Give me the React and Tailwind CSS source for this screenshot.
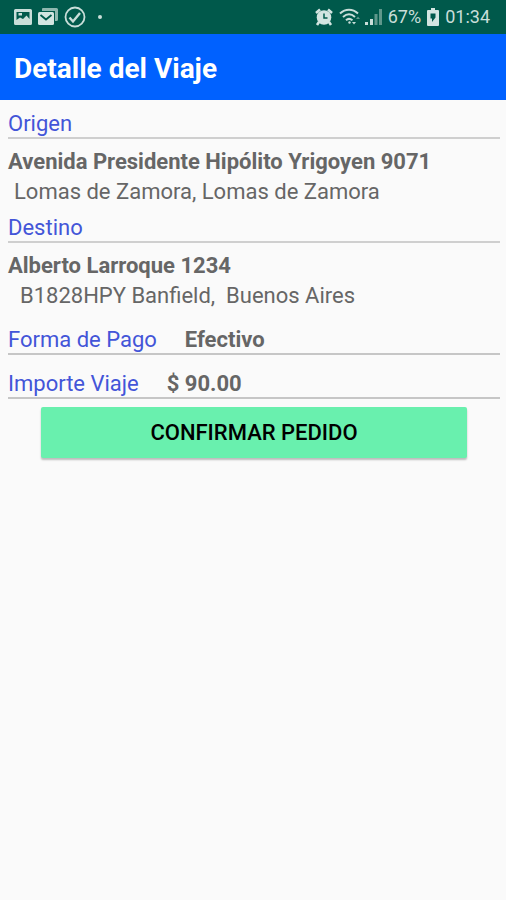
// Encabezado azul de cada sección con su línea inferior
const Seccion = ({ titulo, children }) => (
  <section className="pt-2">
    <h2 className="border-b-2 border-[#cfcfcf] leading-[26px] font-normal text-[#4355d8]">{titulo}</h2>
    <div className="pt-2">{children}</div>
  </section>
);

// Fila con etiqueta y valor en la misma línea
const Dato = ({ etiqueta, valor }) => (
  <div className="flex gap-7 border-b-2 border-[#c6c6c6] pt-4 leading-[26px]">
    <dt className="text-[#4355d8]">{etiqueta}</dt>
    <dd className="font-bold">{valor}</dd>
  </div>
);

const IconosNotificacion = () => (
  <div className="flex items-center gap-1.5">
    {/* Imagen */}
    <svg width="18" height="18" viewBox="0 0 18 18">
      <path fill="#c9ded9" fillRule="evenodd" d="M1.500 1h15a1.500 1.500 0 0 1 1.500 1.500v13a1.500 1.500 0 0 1-1.500 1.500h-15A1.500 1.500 0 0 1 0 15.500v-13A1.500 1.500 0 0 1 1.500 1zM2.500 4v8l3.500-2.500 3 1.500 3.500-3.500 3 3.500V4z" />
      <path fill="#c9ded9" d="M4.500 5h3.500v2.500H4.500z" />
    </svg>
    {/* Correos */}
    <svg width="20" height="18" viewBox="0 0 20 18">
      <path fill="#8fb8af" d="M5 0h13.500A1.500 1.500 0 0 1 20 1.500v10a1.500 1.500 0 0 1-1.500 1.500H17V3H4V1a1 1 0 0 1 1-1z" />
      <rect x="0" y="4" width="16" height="13" rx="1.500" fill="#d3e5e1" />
      <path d="M2.500 7 8 11.500 13.500 7" fill="none" stroke="#00594b" strokeWidth="1.800" />
    </svg>
    {/* Tilde */}
    <svg width="22" height="22" viewBox="0 0 22 22" fill="none" stroke="#c9ded9">
      <circle cx="11" cy="11" r="9.500" strokeWidth="1.800" />
      <path d="m5.500 11.500 3.500 4L16 7" strokeWidth="2.400" />
    </svg>
    <span className="ml-1.5 size-1 rounded-full bg-[#c9ded9]" />
  </div>
);

const IconoAlarma = () => (
  <svg width="18" height="18" viewBox="0 0 18 18">
    <circle cx="9" cy="9.500" r="7.300" fill="#d3e5e1" />
    <path d="M1 5 5 1.500M17 5l-4-3.500M4 14 2 17M14 14l2 3" stroke="#d3e5e1" strokeWidth="2.600" />
    <path d="M9 5.500V10h3.500" fill="none" stroke="#00594b" strokeWidth="1.500" />
  </svg>
);

const IconoWifi = () => (
  <svg width="22" height="18" viewBox="0 0 22 18" fill="none" stroke="#c9ded9" strokeWidth="2">
    <path d="M1 5.500C6.500.500 13.500.500 19 5.500M4 9c4-3.700 8-3.700 12 0M7 12.200c2-1.800 4-1.800 6.500 0" />
    <circle cx="10.500" cy="14.500" r="1.200" fill="#c9ded9" stroke="none" />
    <path d="m13 14 2 2.500 2-2.500z" fill="#c9ded9" stroke="none" />
    <path d="m17 11 2-2.500 2 2.500z" fill="#5f978b" stroke="none" />
  </svg>
);

const IconoSenal = () => (
  <svg width="17" height="18" viewBox="0 0 17 18">
    <path fill="#c9ded9" d="M0 14h3v3H0zM5 11h3v6H5z" />
    <path fill="#5f978b" d="M9.500 6h3v11h-3zM14 1h3v16h-3z" />
  </svg>
);

const IconoBateria = () => (
  <svg width="12" height="18" viewBox="0 0 12 18">
    <path fill="#d3e5e1" d="M4 0h4v2h3a1 1 0 0 1 1 1v14a1 1 0 0 1-1 1H1a1 1 0 0 1-1-1V3a1 1 0 0 1 1-1h3z" />
    <path fill="#00594b" d="M3.500 5.500h5V9.500L5 14v-3.500H3.500z" />
  </svg>
);

const App = () => {
  return (
    <div className="min-h-screen bg-[#fafafa] font-['Roboto',sans-serif] text-[22px] leading-[30px] text-[#666666]">
      {/* BARRA DE ESTADO */}
      <div className="flex h-[34px] items-center justify-between bg-[#00594b] pr-4 pl-3.5">
        <IconosNotificacion />
        <div className="flex items-center text-lg text-[#c9ded9]">
          <IconoAlarma />
          <span className="ml-1.5"><IconoWifi /></span>
          <span className="ml-1"><IconoSenal /></span>
          <span className="ml-1.5">67%</span>
          <span className="ml-1.5"><IconoBateria /></span>
          <span className="ml-1.5">01:34</span>
        </div>
      </div>

      <header className="flex h-[66px] items-center bg-[#0061ff] px-3.5 pt-1">
        <h1 className="text-[28px] font-bold text-white">Detalle del Viaje</h1>
      </header>

      <main className="pt-[3px] pr-1.5 pl-2">
        <Seccion titulo="Origen">
          <p className="font-bold">Avenida Presidente Hipólito Yrigoyen 9071</p>
          <p className="pl-1.5">Lomas de Zamora, Lomas de Zamora</p>
        </Seccion>

        <Seccion titulo="Destino">
          <p className="font-bold">Alberto Larroque 1234</p>
          <p className="pl-3 whitespace-pre-wrap">{'B1828HPY Banfield,  Buenos Aires'}</p>
        </Seccion>

        <dl>
          <Dato etiqueta="Forma de Pago" valor="Efectivo" />
          <Dato etiqueta="Importe Viaje" valor="$ 90.00" />
        </dl>

        <div className="px-[33px] pt-2">
          <button
            type="button"
            className="h-[51px] w-full rounded-xs bg-[#69f0ae] font-medium text-black shadow-[0_2px_2px_rgba(0,0,0,0.25)]"
          >
            CONFIRMAR PEDIDO
          </button>
        </div>
      </main>
    </div>
  );
};

export default App;
